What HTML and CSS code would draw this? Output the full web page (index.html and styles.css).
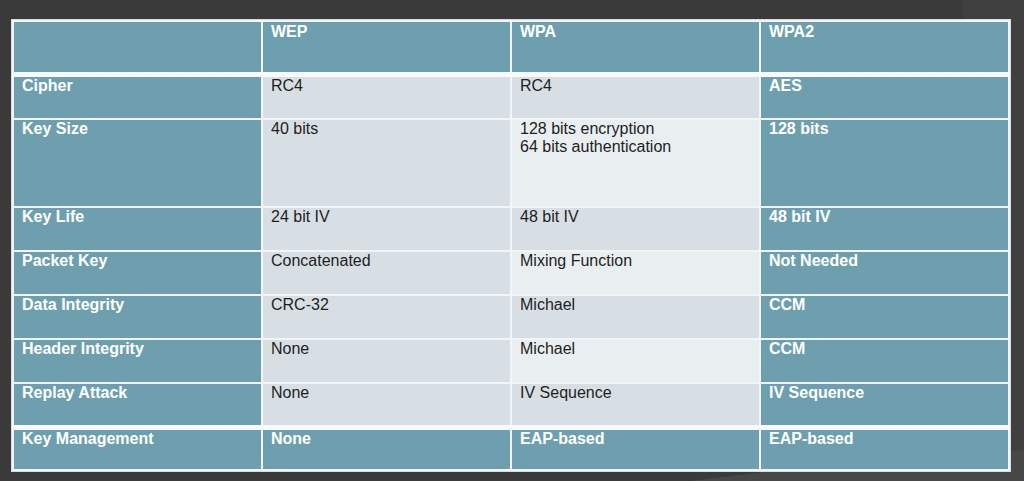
FILE: index.html
```html
<!DOCTYPE html>
<html>
<head>
<meta charset="utf-8">
<link rel="stylesheet" href="styles.css">
</head>
<body>
<div class="slide">
  <svg class="deco" width="1024" height="481" viewBox="0 0 1024 481" aria-hidden="true">
    <polygon points="962,0 1024,0 1024,481 990,481" fill="#404040"/>
    <polygon points="690,481 780,470 1024,450 1024,481" fill="#474747"/>
  </svg>
  <table class="grid">
    <tr class="head">
      <td class="dark"></td>
      <td class="dark bold">WEP</td>
      <td class="dark bold">WPA</td>
      <td class="dark bold">WPA2</td>
    </tr>
    <tr class="first">
      <td class="dark bold">Cipher</td>
      <td class="light">RC4</td>
      <td class="light">RC4</td>
      <td class="dark bold">AES</td>
    </tr>
    <tr class="tall">
      <td class="dark bold">Key Size</td>
      <td class="light">40 bits</td>
      <td class="pale">128 bits encryption<br>64 bits authentication</td>
      <td class="dark bold">128 bits</td>
    </tr>
    <tr>
      <td class="dark bold">Key Life</td>
      <td class="light">24 bit IV</td>
      <td class="light">48 bit IV</td>
      <td class="dark bold">48 bit IV</td>
    </tr>
    <tr>
      <td class="dark bold">Packet Key</td>
      <td class="light">Concatenated</td>
      <td class="pale">Mixing Function</td>
      <td class="dark bold">Not Needed</td>
    </tr>
    <tr>
      <td class="dark bold">Data Integrity</td>
      <td class="light">CRC-32</td>
      <td class="light">Michael</td>
      <td class="dark bold">CCM</td>
    </tr>
    <tr>
      <td class="dark bold">Header Integrity</td>
      <td class="light">None</td>
      <td class="pale">Michael</td>
      <td class="dark bold">CCM</td>
    </tr>
    <tr>
      <td class="dark bold">Replay Attack</td>
      <td class="light">None</td>
      <td class="light">IV Sequence</td>
      <td class="dark bold">IV Sequence</td>
    </tr>
    <tr class="last">
      <td class="dark bold">Key Management</td>
      <td class="dark bold">None</td>
      <td class="dark bold">EAP-based</td>
      <td class="dark bold">EAP-based</td>
    </tr>
  </table>
</div>
</body>
</html>
```

FILE: styles.css
```css
html, body {
  margin: 0;
  padding: 0;
  background: #393939;
}
.slide {
  position: relative;
  width: 1024px;
  height: 481px;
  overflow: hidden;
  background: #3a3a3a;
}
.deco {
  position: absolute;
  left: 0;
  top: 0;
}
.grid {
  position: relative;
  margin: 20px 0 0 12px;
  width: 998px;
  border-collapse: collapse;
  table-layout: fixed;
  font-family: "Liberation Sans", Arial, sans-serif;
  font-size: 16px;
  line-height: 18px;
  outline: 1px solid #d8dde0;
}
.grid td {
  border: 2px solid #f2f5f7;
  vertical-align: top;
  padding: 0 8px;
  height: 44px;
  box-sizing: border-box;
  color: #1e1e1e;
}
.grid tr.head td {
  height: 53px;
  padding-top: 1px;
  border-bottom: 5px solid #f7f9fa;
}
.grid tr.first td {
  height: 45px;
}
.grid tr.last td {
  border-top: 5px solid #f7f9fa;
  height: 43px;
}
.grid tr.tall td {
  height: 88px;
}
.grid td.dark {
  background: #6e9fae;
  color: #ffffff;
}
.grid td.bold {
  font-weight: bold;
}
.grid td.light {
  background: #d8dfe4;
}
.grid td.pale {
  background: #e9eef1;
}
```
